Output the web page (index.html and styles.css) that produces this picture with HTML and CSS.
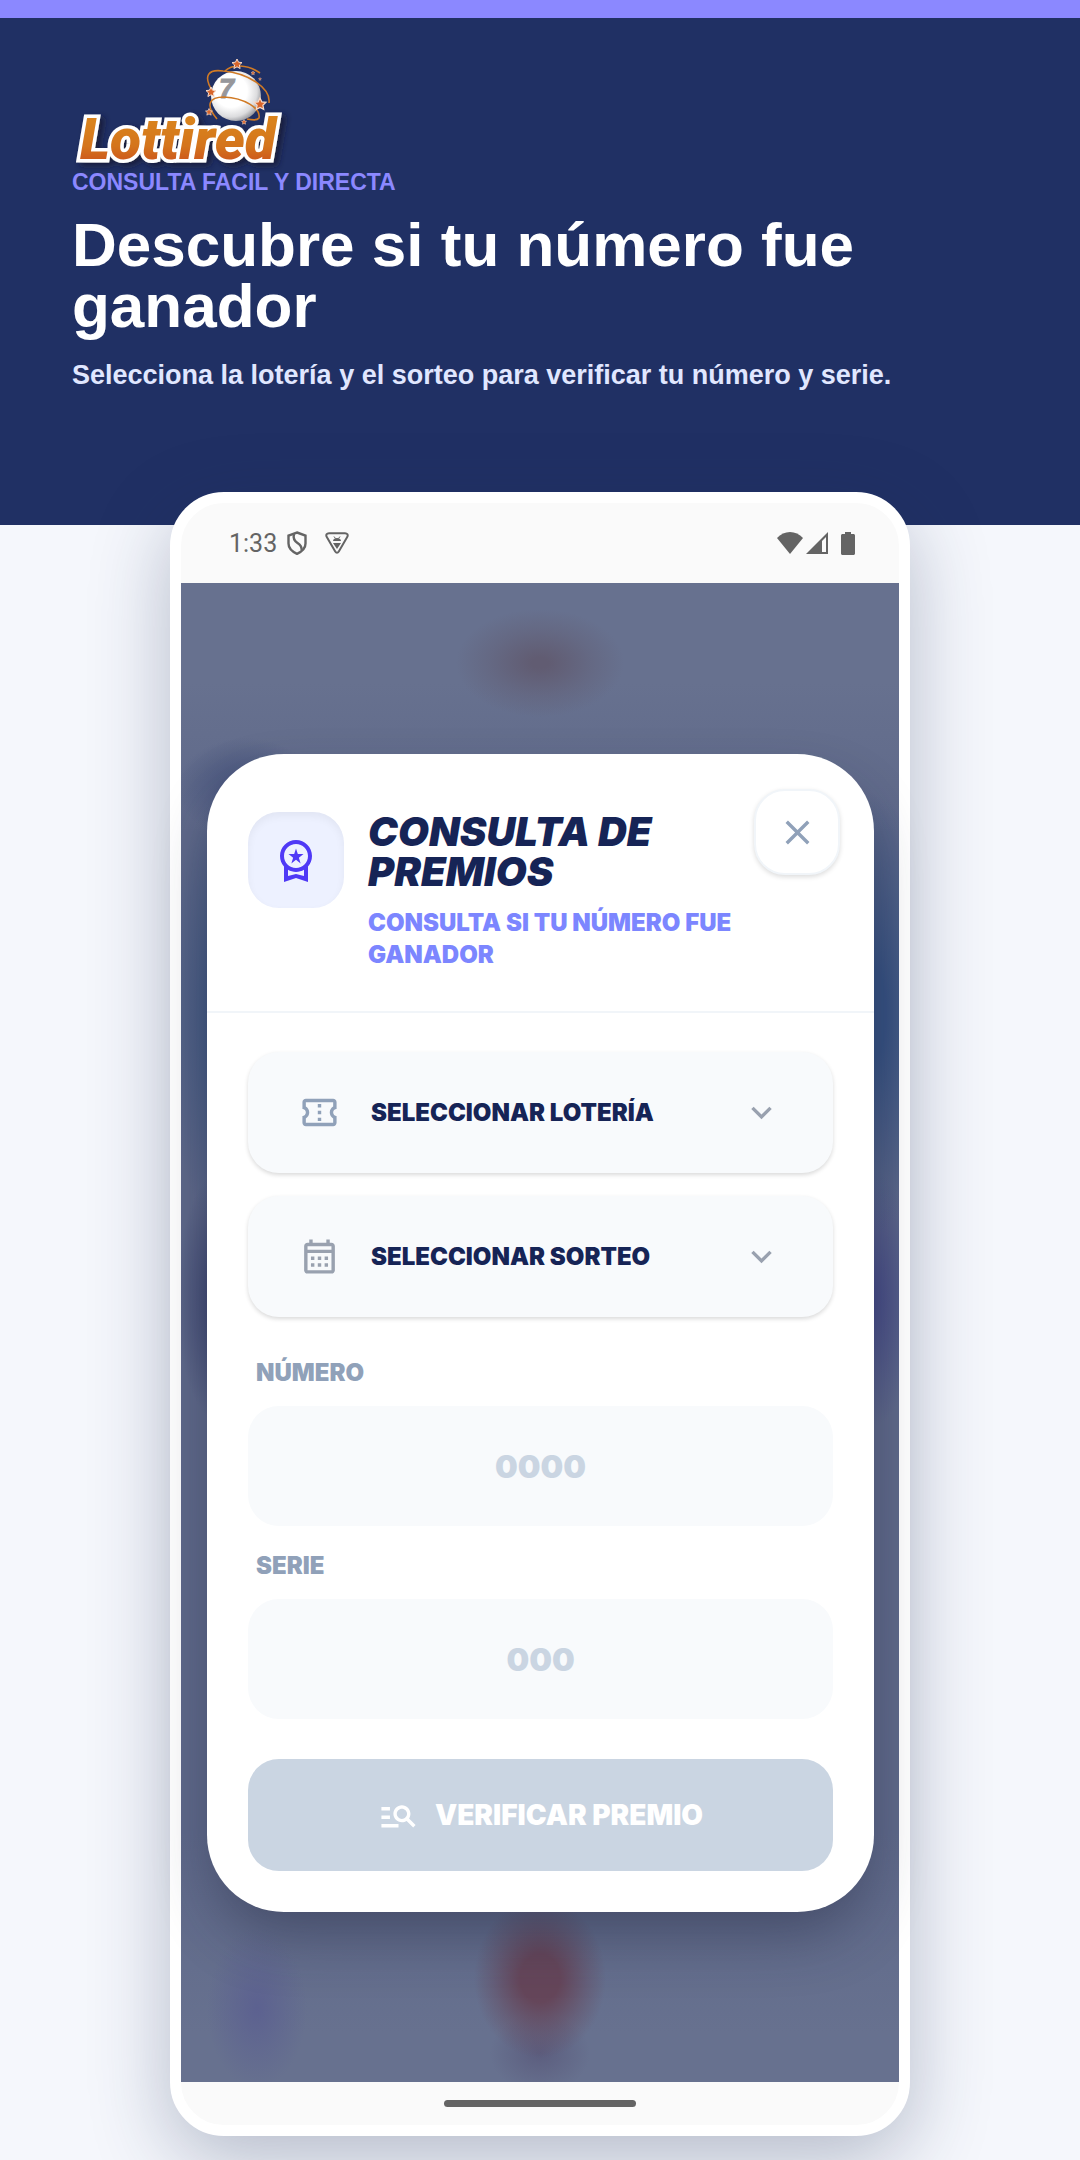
FILE: index.html
```html
<!DOCTYPE html>
<html lang="es">
  <head>
    <meta charset="utf-8" />
    <meta name="viewport" content="width=device-width, initial-scale=1" />
    <title>Lottired - Consulta de premios</title>
    <link rel="stylesheet" href="styles.css" />
  </head>
  <body>
    <header class="hero">
      <svg class="logo" viewBox="0 0 220 116" role="img" aria-label="Lottired">
        <defs>
          <linearGradient id="logo-orange" x1="0" y1="0" x2="0" y2="1">
            <stop offset="0.25" stop-color="#d9821f" />
            <stop offset="0.6" stop-color="#d4741e" />
            <stop offset="0.85" stop-color="#cc551f" />
          </linearGradient>
          <radialGradient id="logo-ball" cx="0.4" cy="0.4" r="0.65">
            <stop offset="0.5" stop-color="#ffffff" />
            <stop offset="0.8" stop-color="#dcdcde" />
            <stop offset="1" stop-color="#8f9096" />
          </radialGradient>
          <filter id="logo-shadow" x="-10%" y="-20%" width="125%" height="150%">
            <feDropShadow dx="4" dy="3" stdDeviation="3" flood-color="#141a33" flood-opacity="0.8" />
          </filter>
          <path id="star" d="M0-5l1.500 3.200 3.500.4-2.600 2.400.7 3.500L0 2.800l-3.100 1.700.7-3.500L-5-1.400l3.500-.4z" />
        </defs>
        <circle cx="164" cy="46" r="25" fill="url(#logo-ball)" />
        <text class="logo-seven" x="147" y="48">7</text>
        <text class="logo-text" x="8" y="109" filter="url(#logo-shadow)">Lottired</text>
        <g fill="none" stroke="#d07a25" stroke-width="1.600">
          <path d="M141 42C130 25 137 19 151 21C176 23 199 38 197 53" />
          <path d="M153 21C160 14 175 14 188 23" />
          <path d="M145 69C133 55 137 47 152 47C172 48 189 58 187 68C185 71 180 70 175 69" />
        </g>
        <g fill="#d8652b" stroke="#f7dccb" stroke-width="1">
          <use href="#star" x="165" y="14" />
          <use href="#star" x="139" y="42" />
          <use href="#star" transform="translate(188 54) scale(1.200)" />
          <use href="#star" transform="translate(137 62) scale(.7)" />
          <use href="#star" transform="translate(172 72) scale(.5)" />
          <use href="#star" transform="translate(181 23) scale(.4)" />
          <use href="#star" transform="translate(188 29) scale(.3)" />
        </g>
      </svg>
      <p class="tagline">CONSULTA FACIL Y DIRECTA</p>
      <h1 class="hero-title">Descubre si tu número fue ganador</h1>
      <p class="hero-text">Selecciona la lotería y el sorteo para verificar tu número y serie.</p>
    </header>

    <main class="phone">
      <div class="status-bar">
        <span class="time">1:33</span>
        <svg class="status-shield" viewBox="0 0 20 24" fill="none" stroke="currentColor" stroke-width="2.400">
          <path d="M10 1.500l8.500 3v8c0 4.500-3.500 8-8.500 10.300C5 20.500 1.500 17 1.500 12.500v-8z" />
          <path d="M7 3c-1 4 .5 7 3.500 9s4.500 4 4 7" />
        </svg>
        <svg class="status-debug" viewBox="0 0 24 22" fill="none" stroke="currentColor" stroke-width="2">
          <path d="M4 1.200h16c2.300 0 3.400 1.800 2.200 3.800l-8.400 14.500c-1 1.600-2.600 1.600-3.600 0L1.800 5C.6 3 1.700 1.200 4 1.200z" />
          <path d="M8 9c0-4 8-4 8 0zM8 11h8l-4 6z" fill="currentColor" stroke="none" />
          <path d="M9 4.500l1.500 2M15 4.500l-1.500 2" stroke-width="1" />
        </svg>
        <div class="status-right">
          <svg class="wifi" viewBox="0 0 26 22"><path d="M13 22L0 6C7-2 19-2 26 6z" fill="currentColor" /></svg>
          <svg class="signal" viewBox="0 0 22 22"><path d="M22 0v22H0zM20 5l-4 4v11h4z" fill="currentColor" fill-rule="evenodd" /></svg>
          <svg class="battery" viewBox="0 0 14 23"><path d="M4 0h6v2h2.500c.8 0 1.500.7 1.500 1.500v18c0 .8-.7 1.500-1.500 1.500h-11C.7 23 0 22.300 0 21.500v-18C0 2.700.7 2 1.500 2H4z" fill="currentColor" /></svg>
        </div>
      </div>

      <div class="screen">
        <section class="modal">
          <div class="modal-header">
            <div class="modal-icon">
              <svg class="icon-large" viewBox="0 0 24 24"><path d="M9.680 13.690L12 11.930l2.310 1.760-.88-2.850L15.750 9h-2.840L12 6.190 11.090 9H8.250l2.310 1.840-.88 2.850zM20 10c0-4.420-3.580-8-8-8s-8 3.580-8 8c0 2.030.76 3.870 2 5.280V23l6-2 6 2v-7.720c1.240-1.410 2-3.250 2-5.280zm-8-6c3.310 0 6 2.690 6 6s-2.690 6-6 6-6-2.690-6-6 2.690-6 6-6zm0 15l-4 1.020v-3.100c1.180.68 2.540 1.080 4 1.080s2.820-.4 4-1.080v3.100L12 19z" /></svg>
            </div>
            <div class="modal-heading">
              <h2 class="modal-title">CONSULTA DE PREMIOS</h2>
              <p class="modal-subtitle">CONSULTA SI TU NÚMERO FUE GANADOR</p>
            </div>
            <button class="close" type="button" aria-label="Cerrar">
              <svg class="icon" viewBox="0 0 24 24"><path d="M19 6.410L17.590 5 12 10.590 6.410 5 5 6.410 10.590 12 5 17.590 6.410 19 12 13.410 17.590 19 19 17.590 13.410 12z" /></svg>
            </button>
          </div>

          <form class="form">
            <div class="select-list">
              <div class="select-box">
                <svg class="icon icon-ticket" viewBox="0 0 24 24"><path d="M22 10V6c0-1.110-.9-2-2-2H4c-1.100 0-1.990.89-1.990 2v4c1.100 0 1.990.9 1.990 2s-.89 2-2 2v4c0 1.100.9 2 2 2h16c1.100 0 2-.9 2-2v-4c-1.100 0-2-.9-2-2s.9-2 2-2zm-2-1.460c-1.190.69-2 1.990-2 3.460s.81 2.770 2 3.460V18H4v-2.540c1.190-.69 2-1.990 2-3.460 0-1.480-.8-2.770-1.990-3.460L4 6h16v2.540zM11 15h2v2h-2zm0-4h2v2h-2zm0-4h2v2h-2z" /></svg>
                <select class="select" id="loteria" name="loteria" aria-label="Lotería">
                  <option>SELECCIONAR LOTERÍA</option>
                </select>
                <svg class="icon" viewBox="0 0 24 24"><path d="M16.590 8.590L12 13.170 7.410 8.590 6 10l6 6 6-6z" /></svg>
              </div>
              <div class="select-box">
                <svg class="icon" viewBox="0 0 24 24"><path d="M19 4h-1V2h-2v2H8V2H6v2H5c-1.110 0-1.990.9-1.990 2L3 20c0 1.100.89 2 2 2h14c1.100 0 2-.9 2-2V6c0-1.100-.9-2-2-2zm0 16H5V10h14v10zm0-12H5V6h14v2zM9 14H7v-2h2v2zm4 0h-2v-2h2v2zm4 0h-2v-2h2v2zm-8 4H7v-2h2v2zm4 0h-2v-2h2v2zm4 0h-2v-2h2v2z" /></svg>
                <select class="select" id="sorteo" name="sorteo" aria-label="Sorteo">
                  <option>SELECCIONAR SORTEO</option>
                </select>
                <svg class="icon" viewBox="0 0 24 24"><path d="M16.590 8.590L12 13.170 7.410 8.590 6 10l6 6 6-6z" /></svg>
              </div>
            </div>
            <div class="field">
              <label class="label" for="numero">NÚMERO</label>
              <input class="input" type="text" id="numero" name="numero" placeholder="0000" />
            </div>
            <div class="field">
              <label class="label" for="serie">SERIE</label>
              <input class="input" type="text" id="serie" name="serie" placeholder="000" />
            </div>
            <button class="submit" type="submit">
              <svg class="icon" viewBox="0 0 24 24"><path d="M7 9H2V7h5v2zm0 3H2v2h5v-2zm13.590 7l-3.830-3.830c-.8.52-1.740.83-2.760.83-2.760 0-5-2.240-5-5s2.240-5 5-5 5 2.240 5 5c0 1.020-.31 1.960-.83 2.750L22 17.590 20.590 19zM17 11c0-1.650-1.350-3-3-3s-3 1.350-3 3 1.350 3 3 3 3-1.350 3-3zM2 19h10v-2H2v2z" /></svg>
              VERIFICAR PREMIO
            </button>
          </form>
        </section>
      </div>

      <div class="nav-bar"><div class="nav-handle"></div></div>
    </main>
  </body>
</html>
```
FILE: styles.css
```css
* {
  box-sizing: border-box;
}

body {
  margin: 0;
  padding-bottom: 24px;
  background-color: #f5f7fc;
  font-family: "Liberation Sans", Arial, sans-serif;
}

h1,
h2,
p {
  margin: 0;
}

/* Header */
.hero {
  border-top: 18px solid #8b88ff;
  background-color: #203064;
  padding: 32px 72px 134px;
  color: #fff;
}

.logo {
  display: block;
  width: 220px;
  height: 116px;
  overflow: visible;
}

.logo-text {
  font-family: Roboto, "Liberation Sans", sans-serif;
  font-size: 57px;
  font-weight: 900;
  font-style: italic;
  fill: url(#logo-orange);
  stroke: #fff;
  stroke-width: 7px;
  paint-order: stroke;
}

.logo-seven {
  font-size: 27px;
  font-weight: bold;
  font-style: italic;
  fill: #97979b;
  stroke: #97979b;
  stroke-width: 1px;
}

.tagline {
  font-size: 23px;
  line-height: 32px;
  font-weight: bold;
  color: #8b88ff;
}

.hero-title {
  margin-top: 16px;
  font-size: 62px;
  line-height: 61px;
  font-weight: bold;
}

.hero-text {
  margin-top: 23px;
  font-size: 27px;
  line-height: 32px;
  font-weight: bold;
  color: #e0e7ff;
}

/* Phone */
.phone {
  position: relative;
  max-width: 740px;
  margin: -33px auto 0;
  border: 11px solid #fff;
  border-radius: 54px;
  background-color: #fafafa;
  box-shadow: 0 24px 80px rgba(31, 45, 85, 0.3);
}

.status-bar {
  display: flex;
  align-items: center;
  height: 80px;
  padding: 0 44px 0 48px;
  color: #646464;
}

.time {
  font-family: Roboto, sans-serif;
  font-size: 25px;
  margin-right: 10px;
}

.status-shield {
  width: 20px;
  height: 24px;
  margin-right: 18px;
}

.status-debug {
  width: 24px;
  height: 22px;
}

.status-right {
  display: flex;
  align-items: center;
  margin-left: auto;
}

.wifi {
  width: 26px;
  height: 22px;
  margin-right: 3px;
}

.signal {
  width: 22px;
  height: 22px;
  margin-right: 13px;
}

.battery {
  width: 14px;
  height: 23px;
}

.screen {
  padding: 171px 25px 170px 26px;
  background-color: #67718f;
  background-image:
    radial-gradient(84px 54px at 50% 80px, #615c72 10%, rgba(97, 92, 114, 0.4) 60%, transparent),
    radial-gradient(70px 50px at 65px 205px, #44517b, transparent),
    radial-gradient(60px 220px at 45px 430px, #3f5680 20%, transparent),
    radial-gradient(60px 220px at calc(100% - 25px) 430px, #355080 20%, transparent),
    radial-gradient(50px 130px at 45px 715px, #333b68, transparent),
    radial-gradient(50px 130px at calc(100% - 30px) 715px, #424785, transparent),
    radial-gradient(66px 80px at 50% 1395px, #65465a 30%, rgba(101, 70, 90, 0.4) 70%, transparent),
    radial-gradient(50px 40px at 50% 1470px, rgba(84, 80, 115, 0.6), transparent),
    radial-gradient(50px 80px at 76px 1425px, #5c6190, transparent),
    linear-gradient(transparent 100px, #5e6889 250px, #5e6889 1250px, transparent 1450px);
}

.nav-bar {
  display: flex;
  align-items: center;
  justify-content: center;
  height: 43px;
}

.nav-handle {
  width: 192px;
  height: 7px;
  border-radius: 4px;
  background-color: #646464;
}

/* Modal */
.modal {
  border-radius: 77px;
  background-color: #fff;
  box-shadow: 0 30px 60px -10px rgba(30, 35, 60, 0.45);
  font-family: Inter, sans-serif;
}

.modal-header {
  display: flex;
  align-items: flex-start;
  padding: 35px 34px 40px 41px;
  border-bottom: 2px solid #f1f5f9;
}

.modal-icon {
  display: flex;
  align-items: center;
  justify-content: center;
  width: 96px;
  height: 96px;
  margin-top: 23px;
  border-radius: 31px;
  background-color: #edf1ff;
  box-shadow: inset 0 4px 8px rgba(0, 0, 0, 0.05);
  color: #4f39f6;
}

.icon-large {
  width: 48px;
  height: 48px;
  fill: currentColor;
}

.icon {
  flex-shrink: 0;
  width: 41px;
  height: 41px;
  fill: currentColor;
}

.modal-heading {
  flex: 1;
  margin: 23px 16px 0 24px;
}

.modal-title {
  font-size: 40px;
  line-height: 40px;
  font-weight: 900;
  font-style: italic;
  color: #162456;
}

.modal-subtitle {
  margin-top: 15px;
  font-size: 24px;
  line-height: 32px;
  font-weight: 900;
  color: #7c86ff;
}

.close {
  display: flex;
  align-items: center;
  justify-content: center;
  width: 86px;
  height: 86px;
  padding: 0;
  border: 2px solid #f1f5f9;
  border-radius: 31px;
  background-color: #fff;
  box-shadow: 0 2px 5px rgba(0, 0, 0, 0.14);
  color: #90a1b9;
}

.form {
  display: flex;
  flex-direction: column;
  padding: 39px 41px 41px;
}

.select-list {
  display: flex;
  flex-direction: column;
  gap: 23px;
  margin-bottom: 16px;
}

.select-box {
  display: flex;
  align-items: center;
  height: 121px;
  padding: 0 51px;
  border-radius: 31px;
  background-color: #f8fafc;
  box-shadow: 0 2px 4px rgba(0, 0, 0, 0.15);
  color: #99a1af;
}

.icon-ticket {
  color: #90a1b9;
}

.select {
  flex: 1;
  min-width: 0;
  height: 100%;
  margin-left: 31px;
  padding: 0;
  border: none;
  appearance: none;
  background: none;
  font-family: Inter, sans-serif;
  font-size: 24px;
  font-weight: 900;
  color: #162456;
}

.field {
  margin-top: 24px;
}

.label {
  display: block;
  padding-left: 8px;
  margin-bottom: 17px;
  font-size: 24px;
  line-height: 32px;
  font-weight: 900;
  color: #90a1b9;
}

.input {
  display: block;
  width: 100%;
  height: 120px;
  border: none;
  border-radius: 31px;
  background-color: #f8fafc;
  font-family: Inter, sans-serif;
  font-size: 32px;
  font-weight: 900;
  text-align: center;
  color: #162456;
}

.input::placeholder {
  color: #cad5e2;
}

.submit {
  display: flex;
  align-items: center;
  justify-content: center;
  gap: 16px;
  height: 112px;
  margin-top: 40px;
  border: none;
  border-radius: 31px;
  background-color: #cad5e2;
  font-family: Inter, sans-serif;
  font-size: 28px;
  font-weight: 900;
  color: #fff;
}
```
